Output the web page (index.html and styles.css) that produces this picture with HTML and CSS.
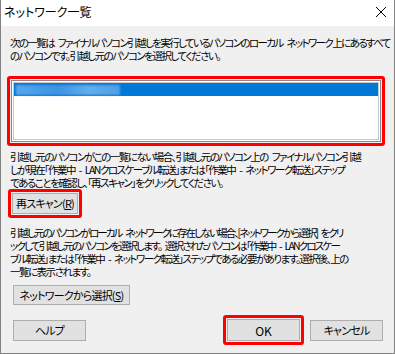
FILE: index.html
```html
<!DOCTYPE html>
<html lang="ja">
<head>
  <meta charset="UTF-8" />
  <title>ネットワーク一覧</title>
  <link rel="stylesheet" href="styles.css">
</head>
<body>

  <div class="window">
    <div class="titlebar">
      <span class="title">ネットワーク一覧</span>
      <svg class="close" width="12" height="12" viewBox="0 0 12 12">
        <path d="M1 1 L11 11 M11 1 L1 11" stroke="#000" stroke-width="1" fill="none" />
      </svg>
    </div>

    <div class="content">
      <p class="text"><span class="tight">次の一覧は ファイナルパソコン引越しを実行しているパソコンのローカル ネットワーク上にあるすべて</span><br>のパソコンです。引越し元のパソコンを選択してください。</p>

      <div class="mark list-mark">
        <div class="listbox">
          <div class="row selected"><span class="blur"></span></div>
        </div>
      </div>

      <p class="text note">引越し元のパソコンがこの一覧にない場合、引越し元のパソコン上の ファイナルパソコン引越<br>しが現在「作業中 - LANクロスケーブル転送」または「作業中 - ネットワーク転送」ステップ<br>であることを確認し、「再スキャン」をクリックしてください。</p>

      <div class="mark btn-mark rescan-mark">
        <button class="btn rescan">再スキャン(<u>R</u>)</button>
      </div>

      <p class="text note2"><span class="tighter">引越し元のパソコンがローカル ネットワークに存在しない場合、[ネットワークから選択] をクリ</span><br><span class="tight2">ックして引越し元のパソコンを選択します。 選択されたパソコンは「作業中 - LANクロスケー</span><br>ブル転送」または「作業中 - ネットワーク転送」ステップである必要があります。選択後、上の<br>一覧に表示されます。</p>

      <button class="btn select">ネットワークから選択(<u>S</u>)</button>

      <div class="footer">
        <button class="btn help">ヘルプ</button>
        <div class="spacer"></div>
        <div class="mark btn-mark">
          <button class="btn ok">OK</button>
        </div>
        <button class="btn cancel">キャンセル</button>
      </div>
    </div>
  </div>

</body>
</html>
```

FILE: styles.css
```css
body {
  margin: 0;
  background: #f0f0f0;
  font-family: "Noto Sans CJK JP", sans-serif;
  color: #000;
}

.window {
  width: 395px;
  height: 354px;
  box-sizing: border-box;
  border: 1px solid #828282;
  border-top: none;
  background: #f0f0f0;
  overflow: hidden;
}

.titlebar {
  height: 26px;
  background: #fff;
  display: flex;
  align-items: center;
  padding-left: 3px;
  padding-right: 7px;
}

.title {
  flex: 1;
  font-size: 12px;
  font-feature-settings: "palt";
  letter-spacing: 0;
  line-height: 14px;
  margin-top: -2px;
}

.close {
  margin-top: -2px;
}

.content {
  padding: 10px 9px 0 9px;
}

.text {
  margin: 0;
  font-size: 10.5px;
  line-height: 13px;
  font-feature-settings: "palt";
  letter-spacing: -1.5px;
  word-spacing: 3px;
  white-space: nowrap;
}

.tight {
  letter-spacing: -1.62px;
}

.tight2 {
  letter-spacing: -1.8px;
}

.tighter {
  letter-spacing: -1.95px;
}

.mark {
  border: 3px solid #ff0000;
  border-radius: 3px;
  padding: 1px;
}

.list-mark {
  margin: 14px 0 0 -3px;
}

.listbox {
  height: 56px;
  background: #fff;
  border: 1px solid #828790;
  box-shadow: inset 0 0 0 1px #fff, inset 0 0 0 2px #c8c8c8;
  padding: 2px;
}

.row {
  height: 13px;
}

.selected {
  background: #0078d7;
  display: flex;
  align-items: center;
}

.blur {
  display: block;
  width: 104px;
  height: 10px;
  margin-left: 2px;
  background: linear-gradient(90deg, #5aa6ec, #3d93e2 40%, #62aeea 70%, #4f9fe6);
  filter: blur(1px);
}

.note {
  margin-top: 4px;
}

.btn-mark {
  display: inline-block;
}

.rescan-mark {
  margin: -1px 0 0 -2px;
}

.btn {
  font-family: "Noto Sans CJK JP", sans-serif;
  font-size: 11px;
  line-height: 13px;
  font-feature-settings: "palt";
  letter-spacing: -0.8px;
  white-space: nowrap;
  height: 21px;
  padding: 0;
  background: #e1e1e1;
  border: 1px solid #adadad;
  color: #000;
  display: block;
}

.rescan {
  width: 66px;
}

.note2 {
  margin-top: 8px;
}

.select {
  width: 117px;
  height: 20px;
  margin: 7px 0 0 3px;
}

.footer {
  display: flex;
  align-items: center;
  margin-top: 10px;
  margin-right: 2px;
}

.help {
  width: 73px;
  margin-left: 3px;
}

.spacer {
  flex: 1;
}

.ok {
  width: 73px;
  height: 22px;
  font-size: 12px;
  letter-spacing: 0;
}

.cancel {
  width: 73px;
  margin-left: 6px;
}
```
